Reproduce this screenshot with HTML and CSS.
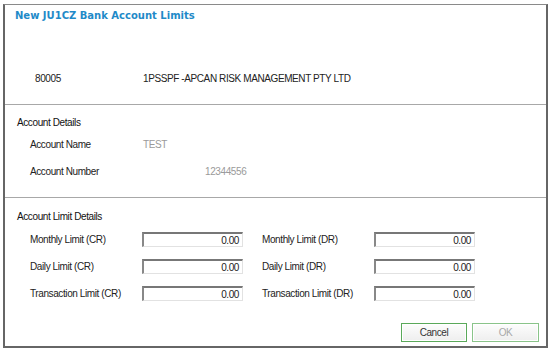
FILE: index.html
```html
<!DOCTYPE html>
<html>
<head>
<meta charset="utf-8">
<link rel="stylesheet" href="styles.css">
</head>
<body>
<div class="dialog">
  <section class="header">
    <h1 class="title">New JU1CZ Bank Account Limits</h1>
    <div class="entity">
      <span class="code">80005</span>
      <span class="name">1PSSPF -APCAN RISK MANAGEMENT PTY LTD</span>
    </div>
  </section>
  <section class="details">
    <h2 class="heading">Account Details</h2>
    <div class="detail-row">
      <span class="label">Account Name</span>
      <span class="value">TEST</span>
    </div>
    <div class="detail-row">
      <span class="label">Account Number</span>
      <span class="value number">12344556</span>
    </div>
  </section>
  <section class="limits">
    <h2 class="heading">Account Limit Details</h2>
    <div class="limit-grid">
      <span class="label">Monthly Limit (CR)</span>
      <div class="field">0.00</div>
      <span class="label">Monthly Limit (DR)</span>
      <div class="field">0.00</div>
      <span class="label">Daily Limit (CR)</span>
      <div class="field">0.00</div>
      <span class="label">Daily Limit (DR)</span>
      <div class="field">0.00</div>
      <span class="label">Transaction Limit (CR)</span>
      <div class="field">0.00</div>
      <span class="label">Transaction Limit (DR)</span>
      <div class="field">0.00</div>
    </div>
    <div class="actions">
      <button class="btn">Cancel</button>
      <button class="btn disabled">OK</button>
    </div>
  </section>
</div>
</body>
</html>
```
FILE: styles.css
```css
* { box-sizing: border-box; }
html, body { margin: 0; padding: 0; background: #fff; }
body {
  font-family: "Liberation Sans", Arial, sans-serif;
  font-size: 10px;
  letter-spacing: -0.4px;
  color: #222;
  padding: 4px 0 0 3px;
}
.dialog {
  width: 545px;
  height: 344px;
  border-top: 1px solid #8a8a8a;
  border-left: 2px solid #666;
  border-right: 2px solid #666;
  border-bottom: 2px solid #666;
  display: flex;
  flex-direction: column;
}
.header {
  height: 100px;
  border-bottom: 1px solid #a8a8a8;
  padding: 4px 0 0 10px;
}
.title {
  margin: 0;
  font-family: "DejaVu Sans", Verdana, sans-serif;
  font-weight: bold;
  font-size: 10px;
  letter-spacing: 0;
  line-height: 14px;
  color: #1f8ac8;
}
.entity {
  margin-top: 49px;
  display: flex;
  line-height: 14px;
  padding-left: 20px;
}
.code { width: 108px; }
.details {
  height: 93px;
  border-bottom: 1px solid #a8a8a8;
  padding: 12px 0 0 12px;
}
.heading {
  margin: 0;
  font-weight: normal;
  font-size: 10px;
  line-height: 12px;
  color: #111;
}
.detail-row {
  display: flex;
  line-height: 12px;
  padding-left: 13px;
  margin-top: 10px;
}
.detail-row + .detail-row { margin-top: 15px; }
.detail-row .label { width: 113px; }
.value { color: #9a9a9a; }
.value.number { padding-left: 62px; }
.limits {
  flex: 1;
  padding: 13px 0 0 12px;
}
.limit-grid {
  display: grid;
  grid-template-columns: 112px 101px 131px 101px;
  grid-auto-rows: 15px;
  row-gap: 12px;
  align-items: center;
  margin-top: 9px;
  padding-left: 13px;
}
.limit-grid .label:nth-child(4n+3) { padding-left: 19px; }
.field {
  height: 15px;
  border-top: 2px solid #777;
  border-left: 2px solid #888;
  border-right: 1px solid #e2e2e2;
  border-bottom: 1px solid #e2e2e2;
  text-align: right;
  padding: 1px 3px 0 0;
  line-height: 11px;
  color: #222;
}
.actions {
  display: flex;
  justify-content: flex-end;
  gap: 5px;
  margin-top: 22px;
  padding-right: 7px;
}
.btn {
  width: 66px;
  height: 19px;
  border: 1px solid #5aa95a;
  box-shadow: inset 0 0 0 1px #fff;
  background: linear-gradient(#fdfdfd, #eeeeee);
  font-family: inherit;
  font-size: 10px;
  letter-spacing: inherit;
  color: #333;
  padding: 0;
}
.btn.disabled { width: 67px; color: #a8a8a8; border-color: #8ac48a; }
```
